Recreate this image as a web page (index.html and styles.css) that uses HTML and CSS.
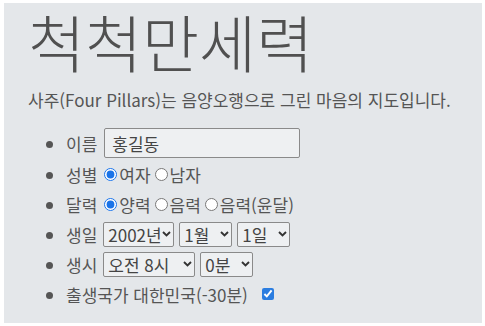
FILE: index.html
```html
<!DOCTYPE html>
<html lang="ko">
<head>
<meta charset="utf-8">
<link rel="stylesheet" href="styles.css">
</head>
<body>
<div class="page">
  <h1 class="title">척척만세력</h1>
  <p class="lead">사주(Four Pillars)는 음양오행으로 그린 마음의 지도입니다.</p>
  <ul class="form">
    <li class="row row-name"><div class="line"><span class="label">이름</span><input class="text" type="text" value="홍길동"></div></li>
    <li class="row"><div class="line"><span class="label">성별</span><label class="opt"><input type="radio" name="gender" checked>여자</label><label class="opt"><input type="radio" name="gender">남자</label></div></li>
    <li class="row"><div class="line"><span class="label">달력</span><label class="opt"><input type="radio" name="cal" checked>양력</label><label class="opt"><input type="radio" name="cal">음력</label><label class="opt"><input type="radio" name="cal">음력(윤달)</label></div></li>
    <li class="row"><div class="line"><span class="label label-sel">생일</span>
      <span class="sel-wrap"><select class="sel sel-year"><option>2002년</option></select><svg class="chev" width="9" height="6" viewBox="0 0 9 6"><path d="M1 1 L4.5 4.5 L8 1" fill="none" stroke="#333" stroke-width="1.9"/></svg></span>
      <span class="sel-wrap"><select class="sel sel-small"><option>1월</option></select><svg class="chev" width="9" height="6" viewBox="0 0 9 6"><path d="M1 1 L4.5 4.5 L8 1" fill="none" stroke="#333" stroke-width="1.9"/></svg></span>
      <span class="sel-wrap"><select class="sel sel-small"><option>1일</option></select><svg class="chev" width="9" height="6" viewBox="0 0 9 6"><path d="M1 1 L4.5 4.5 L8 1" fill="none" stroke="#333" stroke-width="1.9"/></svg></span>
    </div></li>
    <li class="row"><div class="line"><span class="label label-sel">생시</span>
      <span class="sel-wrap"><select class="sel sel-hour"><option>오전 8시</option></select><svg class="chev" width="9" height="6" viewBox="0 0 9 6"><path d="M1 1 L4.5 4.5 L8 1" fill="none" stroke="#333" stroke-width="1.9"/></svg></span>
      <span class="sel-wrap"><select class="sel sel-small"><option>0분</option></select><svg class="chev" width="9" height="6" viewBox="0 0 9 6"><path d="M1 1 L4.5 4.5 L8 1" fill="none" stroke="#333" stroke-width="1.9"/></svg></span>
    </div></li>
    <li class="row"><div class="line"><span class="label">출생국가 대한민국(-30분)</span><input class="check" type="checkbox" checked></div></li>
  </ul>
</div>
</body>
</html>
```

FILE: styles.css
```css
html {
  background: #ffffff;
}
body {
  margin: 3px 3px 3px 4px;
  font-family: "Noto Sans CJK KR", "Noto Sans", sans-serif;
  color: #555555;
}
.page {
  background: #e4e7ea;
  height: 320px;
  padding: 0 0 0 24px;
  box-sizing: border-box;
}
.title {
  margin: 0;
  padding-top: 1px;
  font-size: 62px;
  font-weight: 300;
  line-height: 75px;
  color: #505050;
}
.lead {
  margin: 9px 0 0 0;
  font-size: 17px;
  line-height: 24px;
  color: #555555;
}
.form {
  margin: 15px 0 0 0;
  padding-left: 38px;
  list-style: disc;
  font-size: 17px;
}
.row {
  height: 30px;
}
.row-name {
  height: 32px;
}
.line {
  display: flex;
  align-items: center;
  height: 100%;
}
.row::marker {
  color: #555555;
}
.label {
  margin-right: 7px;
  line-height: 1;
}
.label-sel {
  margin-right: 6px;
}
.text {
  width: 196px;
  height: 30px;
  box-sizing: border-box;
  border: 1px solid #8a8a8a;
  border-radius: 2px;
  background: #eef0f2;
  font-family: inherit;
  font-size: 17px;
  color: #444;
  padding: 0 7px;
  margin: 0;
}
.opt {
  display: flex;
  align-items: center;
  margin-right: 4px;
}
.opt input {
  margin: 0 2px 0 0;
  width: 13px;
  height: 13px;
  accent-color: #1a73e8;
}
.sel-wrap {
  display: inline-flex;
  align-items: center;
  margin-right: 5px;
}
.sel {
  appearance: none;
  -webkit-appearance: none;
  height: 25px;
  box-sizing: border-box;
  border: 1px solid #8a8a8a;
  border-radius: 2px;
  background: #eef0f2;
  font-family: inherit;
  font-size: 17px;
  line-height: 23px;
  color: #444;
  margin: 0;
  padding: 0 12px 0 4px;
}
.chev {
  margin-left: -12px;
  margin-right: 3px;
  pointer-events: none;
}
.sel-year {
  width: 71px;
  padding-right: 10px;
}
.sel-small { width: 53px; }
.sel-hour { width: 92px; }
.check {
  width: 12px;
  height: 12px;
  margin: 0 0 0 7px;
  accent-color: #2b7de0;
}
```
